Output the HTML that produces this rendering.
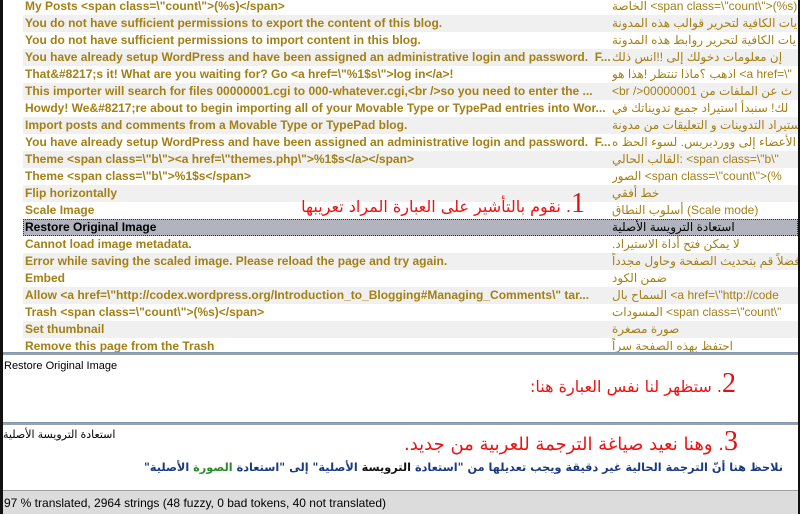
<!DOCTYPE html>
<html><head><meta charset="utf-8"><style>
*{margin:0;padding:0;box-sizing:border-box}
body{width:800px;height:514px;overflow:hidden;background:#fff;position:relative;font-family:"Liberation Sans","DejaVu Sans","Noto Sans CJK SC",sans-serif}
.lb{position:absolute;left:0;top:0;width:3px;height:514px;background:#111}
.rb{position:absolute;left:798px;top:0;width:2px;height:514px;background:#111}
.list{position:absolute;left:3px;top:0;width:795px;height:353px;overflow:hidden}
.row{position:absolute;left:20px;width:775px;height:17px;font-weight:bold;font-size:12px;color:#a47f14;line-height:17px;white-space:nowrap}
.row.g{background:#f0f0f0}
.row.sel{background:#b1b3bf;color:#000;outline:1px dotted #333;outline-offset:-1px}
.l{position:absolute;left:2px;width:585px;overflow:hidden}
.r{position:absolute;left:589px;width:186px;overflow:hidden;font-weight:normal;font-size:12px}
.sep{position:absolute;left:3px;width:795px;height:3px;background:#a0a0a0;border-top:1px solid #7f9db9}
.p{position:absolute;left:4px;font-size:11px;color:#000}
.red{position:absolute;color:#f01010;font-family:"DejaVu Sans","Liberation Sans",sans-serif;font-weight:normal;white-space:nowrap;direction:rtl}
.big{font-size:28px;font-weight:normal;color:#e01010;font-family:"Liberation Serif",serif}
.status{position:absolute;left:3px;top:490px;width:795px;height:24px;background:#dcdcdc;border-top:1px solid #a0a0a0;font-size:12px;line-height:24px;padding-left:1px;color:#000}
</style></head><body>
<div class="list">
<div class="row" style="top:-2px"><span class="l">My Posts &lt;span class=\"count\"&gt;(%s)&lt;/span&gt;</span><span class="r">الخاصة &lt;span class=\"count\"&gt;(%s)</span></div>
<div class="row g" style="top:15px"><span class="l">You do not have sufficient permissions to export the content of this blog.</span><span class="r">يات الكافية لتحرير قوالب هذه المدونة</span></div>
<div class="row" style="top:32px"><span class="l">You do not have sufficient permissions to import content in this blog.</span><span class="r">يات الكافية لتحرير روابط هذه المدونة</span></div>
<div class="row g" style="top:49px"><span class="l">You have already setup WordPress and have been assigned an administrative login and password.&nbsp; F...</span><span class="r">إن معلومات دخولك إلى !!انس ذلك</span></div>
<div class="row" style="top:66px"><span class="l">That&amp;#8217;s it! What are you waiting for? Go &lt;a href=\"%1$s\"&gt;log in&lt;/a&gt;!</span><span class="r">اذهب ؟ماذا تنتظر !هذا هو &lt;a href=\"</span></div>
<div class="row g" style="top:83px"><span class="l">This importer will search for files 00000001.cgi to 000-whatever.cgi,&lt;br /&gt;so you need to enter the ...</span><span class="r">&lt;br /&gt;00000001 ث عن الملفات من</span></div>
<div class="row" style="top:100px"><span class="l">Howdy! We&amp;#8217;re about to begin importing all of your Movable Type or TypePad entries into Wor...</span><span class="r">لك! سنبدأ استيراد جميع تدويناتك في</span></div>
<div class="row g" style="top:117px"><span class="l">Import posts and comments from a Movable Type or TypePad blog.</span><span class="r">ستيراد التدوينات و التعليقات من مدونة</span></div>
<div class="row" style="top:134px"><span class="l">You have already setup WordPress and have been assigned an administrative login and password.&nbsp; F...</span><span class="r">الأعضاء إلى ووردبريس. لسوء الحظ ه</span></div>
<div class="row g" style="top:151px"><span class="l">Theme &lt;span class=\"b\"&gt;&lt;a href=\"themes.php\"&gt;%1$s&lt;/a&gt;&lt;/span&gt;</span><span class="r">القالب الحالي: &lt;span class=\"b\"</span></div>
<div class="row" style="top:168px"><span class="l">Theme &lt;span class=\"b\"&gt;%1$s&lt;/span&gt;</span><span class="r">الصور &lt;span class=\"count\"&gt;(%</span></div>
<div class="row g" style="top:185px"><span class="l">Flip horizontally</span><span class="r">خط أفقي</span></div>
<div class="row" style="top:202px"><span class="l">Scale Image</span><span class="r">أسلوب النطاق (Scale mode)</span></div>
<div class="row sel" style="top:219px"><span class="l">Restore Original Image</span><span class="r">استعادة الترويسة الأصلية</span></div>
<div class="row" style="top:236px"><span class="l">Cannot load image metadata.</span><span class="r">.لا يمكن فتح أداة الاستيراد</span></div>
<div class="row g" style="top:253px"><span class="l">Error while saving the scaled image. Please reload the page and try again.</span><span class="r">فضلاً قم بتحديث الصفحة وحاول مجدداً</span></div>
<div class="row" style="top:270px"><span class="l">Embed</span><span class="r">ضمن الكود</span></div>
<div class="row g" style="top:287px"><span class="l">Allow &lt;a href=\"http://codex.wordpress.org/Introduction_to_Blogging#Managing_Comments\" tar...</span><span class="r">السماح بال &lt;a href=\"http://code</span></div>
<div class="row" style="top:304px"><span class="l">Trash &lt;span class=\"count\"&gt;(%s)&lt;/span&gt;</span><span class="r">المسودات &lt;span class=\"count\"</span></div>
<div class="row g" style="top:321px"><span class="l">Set thumbnail</span><span class="r">صورة مصغرة</span></div>
<div class="row" style="top:338px"><span class="l">Remove this page from the Trash</span><span class="r">احتفظ بهذه الصفحة سراً</span></div>
<div class="red" style="right:213px;top:188px;font-size:16px"><span class="big">1</span>. نقوم بالتأشير على العبارة المراد تعريبها</div>
</div>
<div class="sep" style="top:352px"></div>
<div class="p" style="top:360px">Restore Original Image</div>
<div class="red" style="right:64px;top:368px;font-size:16px"><span class="big">2</span>. ستظهر لنا نفس العبارة هنا:</div>
<div class="sep" style="top:422px"></div>
<div class="p" style="top:428px;direction:rtl;left:3px;white-space:nowrap">استعادة الترويسة الأصلية</div>
<div class="red" style="right:62px;top:426px;font-size:18px"><span class="big">3</span>. وهنا نعيد صياغة الترجمة للعربية من جديد.</div>
<div class="red" style="right:17px;top:461px;font-size:11.3px;font-weight:bold;color:#1a3a80">نلاحظ هنا أنّ الترجمة الحالية غير دقيقة ويجب تعديلها من "استعادة <span style="color:#111">الترويسة</span> الأصلية" إلى "استعادة <span style="color:#2a8a2a">الصورة</span> الأصلية"</div>
<div class="status">97 % translated, 2964 strings (48 fuzzy, 0 bad tokens, 40 not translated)</div>
<div class="lb"></div><div class="rb"></div>
</body></html>
